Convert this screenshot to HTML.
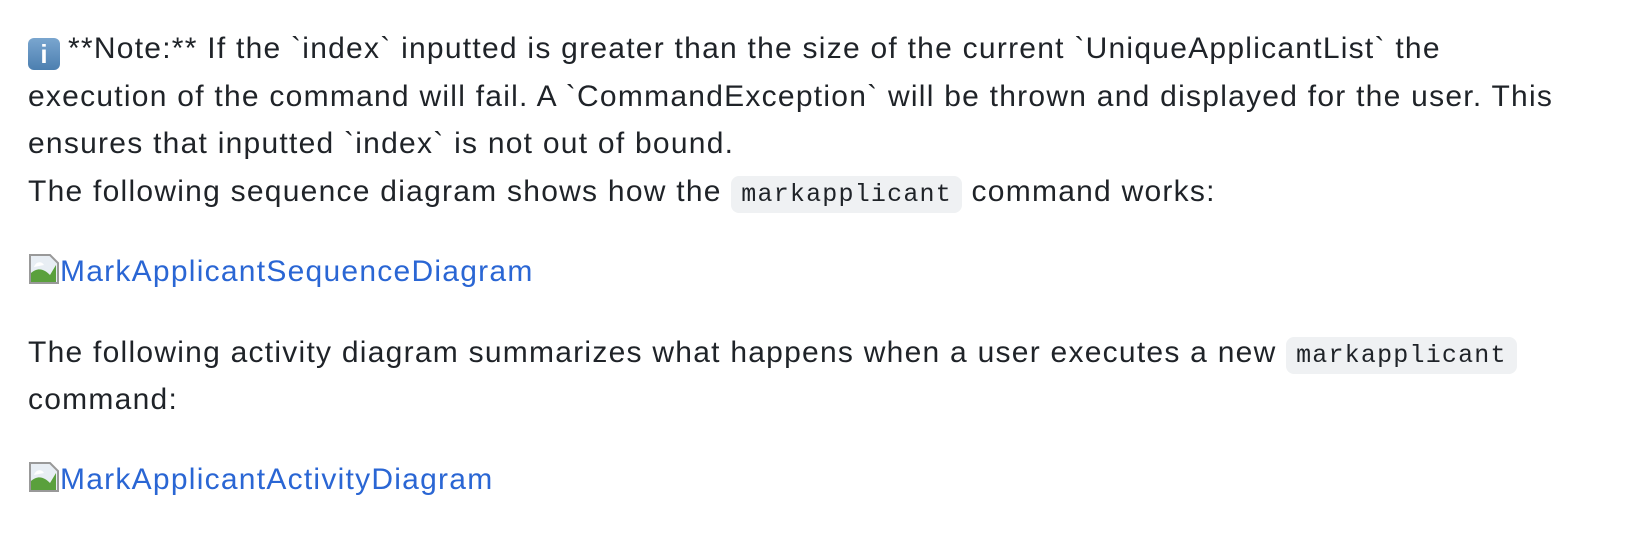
<!DOCTYPE html>
<html><head><meta charset="utf-8"><style>
body{margin:0;background:#fff;width:1630px;height:530px;overflow:hidden;font-family:"Liberation Sans",sans-serif;color:#1f2328;font-size:30px;line-height:47.7px;letter-spacing:1.25px}
.c{position:absolute;left:28px;top:25px;white-space:nowrap}
p{margin:0 0 32px 0}
p.l{margin-bottom:33px}
p.m{margin-bottom:32px}
code{font-family:"Liberation Mono",monospace;font-size:25px;line-height:20px;letter-spacing:1.2px;background:#eff1f3;border-radius:8px;padding:4px 10px}
a{color:#2a66d4;text-decoration:none}
.ic{display:inline-block;width:32px;height:32px;vertical-align:-4px;position:relative}
.info{display:inline-block;width:32px;height:32px;border-radius:6px;background:linear-gradient(#7aa6cf,#4c7fb0);vertical-align:-5px;color:#fff;text-align:center;font-weight:bold;font-size:26px;line-height:32px;margin-right:8px;letter-spacing:0}
</style></head><body><div class="c">
<p><span class="info">i</span>**Note:** If the `index` inputted is greater than the size of the current `UniqueApplicantList` the<br>execution of the command will fail. A `CommandException` will be thrown and displayed for the user. This<br>ensures that inputted `index` is not out of bound.<br>The following sequence diagram shows how the <code>markapplicant</code> command works:</p>
<p class="l"><a><svg class="ic" viewBox="0 0 32 32"><path d="M2 2H22L30 10V30H2Z" fill="#e8eef4" stroke="#999" stroke-width="2"/><path d="M3 29V20C10 14 16 16 22 22L28 12V29Z" fill="#5aa03c"/><path d="M6 14C8 8 14 8 16 12" fill="#fff"/></svg>MarkApplicantSequenceDiagram</a></p>
<p class="m">The following activity diagram summarizes what happens when a user executes a new <code>markapplicant</code><br>command:</p>
<p><a><svg class="ic" viewBox="0 0 32 32"><path d="M2 2H22L30 10V30H2Z" fill="#e8eef4" stroke="#999" stroke-width="2"/><path d="M3 29V20C10 14 16 16 22 22L28 12V29Z" fill="#5aa03c"/><path d="M6 14C8 8 14 8 16 12" fill="#fff"/></svg>MarkApplicantActivityDiagram</a></p>
</div></body></html>
